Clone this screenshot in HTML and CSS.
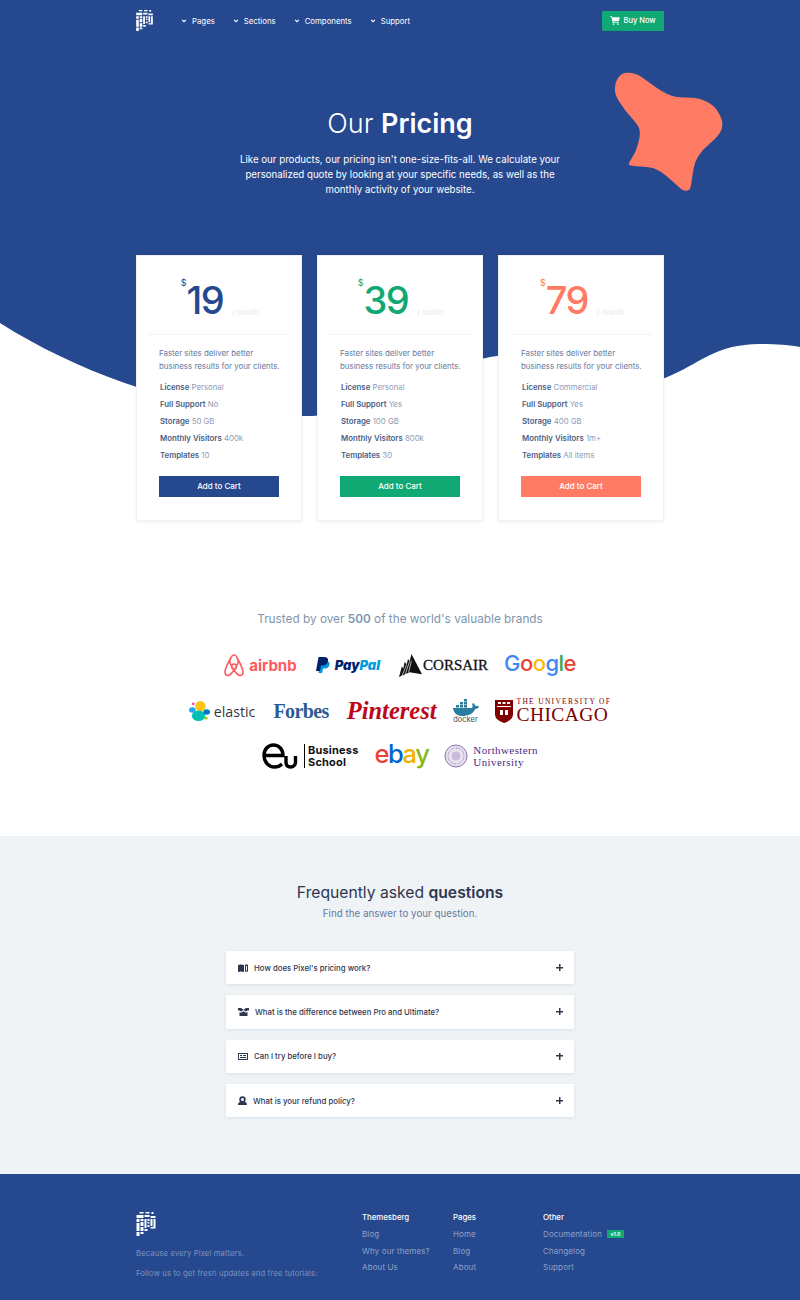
FILE: index.html
```html
<!DOCTYPE html>
<html lang="en">
<head>
    <meta charset="UTF-8">
    <title>Pixel - Our Pricing</title>
    <link rel="stylesheet" href="styles.css">
</head>
<body>
    <svg class="defs" width="0" height="0">
        <symbol id="logo" viewBox="0 0 19 24">
            <path fill="#fff" d="M3 0h4v1.5H3zM9 0h4v1.5H9zM15 0h2v2h-2zM0 3h7v3H0zM8 3h5v2H8zM14 4h5v2h-5zM0 7h3v3H0zM4 7h3v2H4zM0 11h3v8H0zM4 10h3v4H4zM8 7h2v9H8zM11 7h2v2h-2zM11 10h2v1.5h-2zM14 7h2v7h-2zM17 7h2v9h-2zM11 13h2v2h-2zM14 15h5v1.5h-5zM4 15h3v4H4zM8 17h3v2H8zM0 20h3v4H0zM4 20h3v2H4z"/>
        </symbol>
        <symbol id="chev" viewBox="0 0 8 8">
            <path fill="none" stroke="#fff" stroke-width="1.5" d="M1.5 2.5 4 5l2.5-2.5"/>
        </symbol>
    </svg>

    <div class="top">
        <svg class="wave" viewBox="0 0 800 420" width="800" height="420">
            <path fill="#25488f" d="M0 323C90 380 200 414 303 416C380 417 420 372 490 357C560 345 620 392 665 378C700 364 715 344 760 344C775 344 790 345 800 347V0H0Z"/>
        </svg>
        <svg class="blob" viewBox="0 0 110 122" width="110" height="122">
            <path fill="#ff7b63" d="M11 2C17 1 22 3 26 5C32 9 37 13 43 17C49 21 56 25 63 26C72 27 80 26 86 28C95 31 102 36 104 41C108 47 109 52 108 57C106 65 96 72 89 79C84 85 81 90 80 96C78 104 78 112 76 118C73 121 69 120 66 117C58 110 50 101 39 97C31 95 20 96 15 94C14 91 21 84 23 76C25 70 27 63 25 57C22 50 14 44 9 36C4 29 0 23 1 16C2 8 6 3 11 2Z"/>
        </svg>

        <header class="nav wrap">
            <svg class="nav-logo"><use href="#logo"/></svg>
            <nav class="nav-links">
                <a><svg class="chev"><use href="#chev"/></svg>Pages</a>
                <a><svg class="chev"><use href="#chev"/></svg>Sections</a>
                <a><svg class="chev"><use href="#chev"/></svg>Components</a>
                <a><svg class="chev"><use href="#chev"/></svg>Support</a>
            </nav>
            <a class="buy">
                <svg viewBox="0 0 12 11" width="10" height="9"><path fill="#fff" d="M0 0h2.2l.4 1.5H12l-1.4 5H3.8l.3 1h6.400v1H3.300L1.500 1H0z"/><circle fill="#fff" cx="4.200" cy="10" r="1"/><circle fill="#fff" cx="9.500" cy="10" r="1"/></svg>
                Buy Now
            </a>
        </header>

        <section class="hero">
            <h1>Our <b>Pricing</b></h1>
            <p>Like our products, our pricing isn't one-size-fits-all. We calculate your personalized quote by looking at your specific needs, as well as the monthly activity of your website.</p>
        </section>

        <section class="cards wrap">
            <div class="card blue">
                <div class="price"><span class="cur">$</span><span class="num">19</span><span class="per">/ month</span></div>
                <div class="body">
                    <p class="desc">Faster sites deliver better<br>business results for your clients.</p>
                    <ul>
                        <li><b>License</b> Personal</li>
                        <li><b>Full Support</b> No</li>
                        <li><b>Storage</b> 50 GB</li>
                        <li><b>Monthly Visitors</b> 400k</li>
                        <li><b>Templates</b> 10</li>
                    </ul>
                    <a class="cart">Add to Cart</a>
                </div>
            </div>
            <div class="card green">
                <div class="price"><span class="cur">$</span><span class="num">39</span><span class="per">/ month</span></div>
                <div class="body">
                    <p class="desc">Faster sites deliver better<br>business results for your clients.</p>
                    <ul>
                        <li><b>License</b> Personal</li>
                        <li><b>Full Support</b> Yes</li>
                        <li><b>Storage</b> 100 GB</li>
                        <li><b>Monthly Visitors</b> 800k</li>
                        <li><b>Templates</b> 30</li>
                    </ul>
                    <a class="cart">Add to Cart</a>
                </div>
            </div>
            <div class="card orange">
                <div class="price"><span class="cur">$</span><span class="num">79</span><span class="per">/ month</span></div>
                <div class="body">
                    <p class="desc">Faster sites deliver better<br>business results for your clients.</p>
                    <ul>
                        <li><b>License</b> Commercial</li>
                        <li><b>Full Support</b> Yes</li>
                        <li><b>Storage</b> 400 GB</li>
                        <li><b>Monthly Visitors</b> 1m+</li>
                        <li><b>Templates</b> All items</li>
                    </ul>
                    <a class="cart">Add to Cart</a>
                </div>
            </div>
        </section>
    </div>

    <section class="brands">
        <h2>Trusted by over <b>500</b> of the world's valuable brands</h2>
        <div class="logo-row row-1">
            <span class="brand airbnb">
                <svg viewBox="0 0 20 23" width="20" height="23"><path fill="none" stroke="#ff5a5f" stroke-width="1.6" d="M10 16C7 12 5 9 6 6C7 3 8.5 1 10 1s3 2 4 5c1 3-1 6-4 10c-2 3-4 5.500-6 5.500C2 21.500 1 20 1 18c0-3 3-9 6-14.500M10 16c2 3 4 5.500 6 5.500c2 0 3-1.500 3-3.500c0-3-3-9-6-14.500M10 10c-1.500 0-2.500 1-2.500 2.500c0 1.500 1 2.500 2.500 3.500c1.500-1 2.500-2 2.500-3.500C12.500 11 11.500 10 10 10z"/></svg>
                airbnb
            </span>
            <span class="brand paypal">
                <svg viewBox="0 0 14 17" width="14" height="17"><path fill="#009cde" d="M4 4h6c3 0 4 1.500 3.500 4c-.6 2.500-2.300 3.500-4.500 3.500H7L6.200 16H2.500z"/><path fill="#012169" d="M2.500 0H8c3 0 4.500 1.300 4 4c-.5 3-2.500 4.500-5 4.500H5L4 14H0z"/></svg>
                <i><b class="pay">Pay</b><b class="pal">Pal</b></i>
            </span>
            <span class="brand corsair">
                <svg viewBox="0 0 24 24" width="23" height="23"><path fill="#111" d="M0 24L3 13L4.500 15L6 8L8 11L9.500 5L11 8L13 0L24 21L11 19z"/><path fill="none" stroke="#fff" stroke-width=".7" d="M3 23L8 11M6.500 21L11 8M10 19L13 7"/></svg>
                <span>CORSAIR</span>
            </span>
            <span class="google"><span class="g-b">G</span><span class="g-r">o</span><span class="g-y">o</span><span class="g-b">g</span><span class="g-g">l</span><span class="g-r">e</span></span>
        </div>
        <div class="logo-row row-2">
            <span class="brand elastic">
                <svg viewBox="0 0 22 22" width="21" height="22"><circle cx="12" cy="6" r="5.500" fill="#fec514"/><ellipse cx="10" cy="16" rx="7" ry="5.500" fill="#00bfb3"/><ellipse cx="3.500" cy="10" rx="3.500" ry="2.800" fill="#1ba9f5"/><ellipse cx="18.500" cy="12" rx="3.500" ry="2.800" fill="#0077cc"/><rect x="3" y="2" width="3" height="3" rx="1.500" fill="#f04e98"/><rect x="16" y="17" width="3.500" height="3" rx="1.500" fill="#93c90e"/></svg>
                elastic
            </span>
            <span class="forbes">Forbes</span>
            <span class="pinterest">Pinterest</span>
            <span class="docker">
                <svg viewBox="0 -3 28 18" width="28" height="18"><path fill="#2a7d9e" d="M1 7h19c1-2 .5-3 0-4l1.500-1c1 .8 1.700 2 1.700 3c1.500-.3 3-.1 4 .8c-1 1.800-2.500 2.200-4 2.200C21 13 16 15 10 15C4 15 1.500 11 1 7z"/><path fill="#2a7d9e" d="M4 4h3v2.500H4zM8 4h3v2.500H8zM12 4h3v2.500h-3zM8 1h3v2.500H8zM12 1h3v2.500h-3zM12-2h3v2.500h-3z"/></svg>
                <span>docker</span>
            </span>
            <span class="brand chicago">
                <svg viewBox="0 0 18 23" width="18" height="23"><path fill="#800000" d="M0 0h18v14c0 5-4 7-9 9c-5-2-9-4-9-9z"/><path fill="#fff" d="M2 6h14v1H2zM3 2h3v2H3zM7.500 2h3v2h-3zM12 2h3v2h-3zM5 10h3v5H5zM10 10h3v5h-3z"/></svg>
                <span class="uc"><small>THE UNIVERSITY OF</small><strong>CHICAGO</strong></span>
            </span>
        </div>
        <div class="logo-row row-3">
            <span class="brand eu">
                <svg viewBox="0 0 36 26" width="36" height="26"><path fill="none" stroke="#000" stroke-width="3.400" d="M2.500 12.500H21C21 6.500 17 2 11.500 2C6 2 2 6.500 2 12.500C2 19 6.500 24 12.500 24C15.500 24 18 23 20 21M24 13V19C24 22 25.500 24 28.500 24C31.500 24 33.500 22 33.500 19V13"/></svg>
                <span class="eu-bar"></span>
                <span class="eu-text">Business<br>School</span>
            </span>
            <span class="ebay"><span class="g-r">e</span><span class="eb-b">b</span><span class="eb-y">a</span><span class="eb-g">y</span></span>
            <span class="brand nw">
                <svg viewBox="0 0 24 24" width="24" height="24"><circle cx="12" cy="12" r="11" fill="#e9e3f0" stroke="#8a74a8"/><circle cx="12" cy="12" r="8" fill="none" stroke="#9b88b5" stroke-dasharray="1.500 1"/><circle cx="12" cy="12" r="4.500" fill="#c9bcd8"/></svg>
                <span class="nw-text">Northwestern<br>University</span>
            </span>
        </div>
    </section>

    <section class="faq">
        <h2>Frequently asked <b>questions</b></h2>
        <p class="faq-sub">Find the answer to your question.</p>
        <div class="faq-list">
            <div class="faq-item">
                <svg viewBox="0 0 10 8" width="10" height="8"><path fill="#2e3650" d="M0 1c2-.8 3.500-.8 6 0v7c-2.500-.8-4-.8-6 0zM7 1c1-.6 2-.6 3 0v7c-1-.6-2-.6-3 0zM8 2v4.500c.4-.1.6-.1 1 0V2z"/></svg>
                <span>How does Pixel's pricing work?</span><i class="plus"></i>
            </div>
            <div class="faq-item">
                <svg viewBox="0 0 11 8" width="11" height="8"><path fill="#2e3650" d="M0 0l3 0 2.500 1.800L8 0h3v2.500H9.500L8 3.500 5.500 2 3 3.500 1.500 2.500H0zM1.500 4l1.500.800 2.500-1.500 2.500 1.500 1.500-.8V8h-8z"/></svg>
                <span>What is the difference between Pro and Ultimate?</span><i class="plus"></i>
            </div>
            <div class="faq-item">
                <svg viewBox="0 0 10 7" width="10" height="7"><path fill="#2e3650" d="M0 0h10v7H0zM1 1v5h8V1z"/><path fill="#2e3650" d="M2 2h2v1H2zM5 2h3v1H5zM2 4h6v1H2z"/></svg>
                <span>Can I try before I buy?</span><i class="plus"></i>
            </div>
            <div class="faq-item">
                <svg viewBox="0 0 9 9" width="9" height="9"><circle cx="4.500" cy="3.500" r="3.200" fill="#2e3650"/><circle cx="4.500" cy="3.500" r="1.500" fill="#fff"/><path fill="#2e3650" d="M0 9c0-2 1-3 2-3h5c1 0 2 1 2 3z"/></svg>
                <span>What is your refund policy?</span><i class="plus"></i>
            </div>
        </div>
    </section>

    <footer class="footer">
        <div class="wrap foot-inner">
            <div class="foot-about">
                <svg class="foot-logo"><use href="#logo"/></svg>
                <p>Because every Pixel matters.</p>
                <p>Follow us to get fresh updates and free tutorials:</p>
            </div>
            <div class="foot-col col-a">
                <h4>Themesberg</h4>
                <a>Blog</a>
                <a>Why our themes?</a>
                <a>About Us</a>
            </div>
            <div class="foot-col col-b">
                <h4>Pages</h4>
                <a>Home</a>
                <a>Blog</a>
                <a>About</a>
            </div>
            <div class="foot-col">
                <h4>Other</h4>
                <a>Documentation <span class="badge">v1.0</span></a>
                <a>Changelog</a>
                <a>Support</a>
            </div>
        </div>
    </footer>
</body>
</html>
```

FILE: styles.css
```css
* {
    box-sizing: border-box;
}
body {
    margin: 0;
    font-family: "Inter", "Liberation Sans", sans-serif;
    background: #fff;
    color: #2e3650;
    overflow-x: hidden;
}
h1, h2, h4, p, ul {
    margin: 0;
    padding: 0;
}
ul {
    list-style: none;
}
.defs {
    position: absolute;
}
.wrap {
    width: 528px;
    margin: 0 auto;
}

/* top blue area */
.top {
    position: relative;
}
.wave, .blob {
    position: absolute;
    top: 0;
    left: 0;
}
.blob {
    top: 71px;
    left: 614px;
}
.nav, .hero, .cards {
    position: relative;
}
.nav {
    height: 41px;
    display: flex;
    align-items: center;
}
.nav-logo {
    width: 17px;
    height: 21px;
    margin-right: 28px;
}
.nav-links {
    display: flex;
    gap: 18px;
    flex: 1;
}
.nav-links a {
    display: flex;
    align-items: center;
    color: #fff;
    font-size: 7.8px;
}
.chev {
    width: 6px;
    height: 6px;
    margin-right: 5px;
}
.buy {
    width: 62px;
    height: 20px;
    display: flex;
    align-items: center;
    justify-content: center;
    gap: 3px;
    background: #10a873;
    color: #fff;
    font-size: 7.5px;
    font-weight: 500;
    border-radius: 1px;
}

.hero {
    text-align: center;
    color: #fff;
    padding-top: 65px;
}
.hero h1 {
    font-size: 27px;
    line-height: 36px;
    font-weight: 300;
}
.hero h1 b {
    font-weight: 600;
}
.hero p {
    width: 340px;
    margin: 10px auto 0;
    font-size: 9.7px;
    line-height: 15px;
}

/* pricing cards */
.cards {
    display: grid;
    grid-template-columns: repeat(3, 166px);
    gap: 15px;
    margin-top: 58px;
}
.card {
    height: 266px;
    background: #fff;
    border: 1px solid #eef0f3;
    box-shadow: 0 1px 3px rgba(46, 54, 80, .08);
}
.price {
    height: 79px;
    margin: 0 11px;
    border-bottom: 1px solid #f3f4f6;
    display: flex;
    justify-content: center;
    padding-top: 21px;
}
.cur {
    font-size: 9px;
    line-height: 9px;
    margin: 1px 0 0 2px;
}
.num {
    font-size: 38px;
    line-height: 46px;
    font-weight: 500;
    letter-spacing: -1.6px;
}
.per {
    font-size: 7.5px;
    color: #e6e8ec;
    margin: 31px 0 0 9px;
}
.blue .cur, .blue .num {
    color: #25488f;
}
.green .cur, .green .num {
    color: #10a873;
}
.orange .cur, .orange .num {
    color: #ff7b63;
}
.body {
    padding: 12px 22px 0;
}
.desc {
    font-size: 7.9px;
    line-height: 12.5px;
    color: #66799e;
    white-space: nowrap;
}
.body ul {
    margin: 7px 0 0 1px;
}
.body li {
    font-size: 7.8px;
    line-height: 17px;
    color: #8d9bb5;
    white-space: nowrap;
}
.body li b {
    font-weight: 600;
    color: #4c5e85;
}
.cart {
    display: block;
    height: 21px;
    margin-top: 12px;
    font-size: 8px;
    font-weight: 500;
    line-height: 21px;
    text-align: center;
    color: #fff;
}
.blue .cart {
    background: #25488f;
}
.green .cart {
    background: #10a873;
}
.orange .cart {
    background: #ff7b63;
}

/* brand logos */
.brands {
    height: 315px;
    padding-top: 90px;
}
.brands h2 {
    font-size: 11.8px;
    line-height: 16px;
    font-weight: 400;
    color: #8095ad;
    text-align: center;
}
.brands h2 b {
    font-weight: 600;
}
.logo-row {
    display: flex;
    justify-content: center;
    align-items: center;
    height: 26px;
}
.row-1 {
    margin-top: 25px;
    gap: 19px;
}
.row-2 {
    margin-top: 20px;
    gap: 15px;
}
.row-3 {
    margin-top: 19px;
    gap: 16px;
}
.brand {
    display: flex;
    align-items: center;
    gap: 5px;
}
.airbnb {
    font-size: 15px;
    font-weight: 700;
    color: #ff5a5f;
}
.paypal {
    font-size: 13px;
    font-weight: 800;
}
.pay {
    color: #012169;
}
.pal {
    color: #009cde;
}
.corsair {
    gap: 1px;
    font-family: "Liberation Serif", serif;
    font-size: 15px;
    -webkit-text-stroke: .3px #111;
    color: #111;
}
.google {
    font-size: 22px;
    font-weight: 500;
    letter-spacing: -.6px;
    margin: -4px 0 0 -3px;
}
.g-b {
    color: #4285f4;
}
.g-r {
    color: #ea4335;
}
.g-y {
    color: #fbbc05;
}
.g-g {
    color: #34a853;
}
.elastic {
    font-family: "Open Sans", sans-serif;
    font-size: 14.2px;
    color: #343741;
    gap: 4px;
}
.forbes {
    margin: 0 3px;
    font-family: "Liberation Serif", serif;
    font-size: 20px;
    font-weight: 700;
    letter-spacing: -.6px;
    color: #2c5b94;
}
.pinterest {
    font-family: "Liberation Serif", serif;
    font-size: 24.5px;
    font-weight: 700;
    font-style: italic;
    color: #bd081c;
}
.docker {
    display: flex;
    flex-direction: column;
    align-items: center;
    font-size: 7.5px;
    line-height: 8px;
    color: #394d54;
}
.chicago {
    gap: 4px;
    font-family: "Liberation Serif", serif;
    color: #800000;
}
.uc {
    display: flex;
    flex-direction: column;
    line-height: 1;
}
.uc small {
    font-size: 7.5px;
    letter-spacing: 1.3px;
    white-space: nowrap;
}
.uc strong {
    font-size: 19.5px;
    font-weight: 400;
    letter-spacing: .4px;
}
.eu {
    gap: 6px;
}
.eu-bar {
    width: 1px;
    height: 24px;
    background: #000;
}
.eu-text {
    margin-left: -3px;
    font-size: 11px;
    line-height: 12.5px;
    font-weight: 700;
    letter-spacing: .2px;
    color: #111;
}
.ebay {
    font-size: 25.5px;
    letter-spacing: -1.5px;
    font-weight: 500;
    margin-top: -5px;
}
.eb-b {
    color: #0064d2;
}
.eb-y {
    color: #f5af02;
}
.eb-g {
    color: #86b817;
}
.nw-text {
    font-family: "Liberation Serif", serif;
    font-size: 11px;
    line-height: 12px;
    letter-spacing: .4px;
    color: #4e2a84;
}

/* faq */
.faq {
    height: 338px;
    background: #eff3f6;
    padding-top: 47px;
    text-align: center;
}
.faq h2 {
    font-size: 15.7px;
    line-height: 20px;
    font-weight: 400;
    color: #2e3650;
}
.faq h2 b {
    font-weight: 600;
}
.faq-sub {
    margin-top: 5px;
    font-size: 9.8px;
    line-height: 12px;
    color: #66799e;
}
.faq-list {
    width: 348px;
    margin: 31px auto 0;
    display: flex;
    flex-direction: column;
    gap: 11px;
}
.faq-item {
    height: 33.3px;
    display: flex;
    align-items: center;
    gap: 6px;
    padding: 0 11px 0 12px;
    background: #fff;
    box-shadow: 0 1px 3px rgba(46, 54, 80, .1);
    font-size: 7.8px;
    font-weight: 500;
    color: #2e3650;
    text-align: left;
}
.faq-item span {
    flex: 1;
}
.plus {
    width: 7px;
    height: 7px;
    background:
        linear-gradient(#2e3650, #2e3650) center / 7px 1.5px no-repeat,
        linear-gradient(#2e3650, #2e3650) center / 1.5px 7px no-repeat;
}

/* footer */
.footer {
    height: 126px;
    background: #25488f;
    padding-top: 38px;
}
.foot-inner {
    display: flex;
}
.foot-about {
    width: 226px;
}
.foot-logo {
    display: block;
    width: 20px;
    height: 24px;
    margin-bottom: 13px;
}
.foot-about p {
    font-size: 7.7px;
    letter-spacing: .12px;
    line-height: 10px;
    margin-bottom: 10px;
    color: #7f93bd;
    white-space: nowrap;
}
.foot-col {
    display: flex;
    flex-direction: column;
    font-size: 8px;
}
.col-a {
    width: 91px;
}
.col-b {
    width: 90px;
}
.foot-col h4 {
    font-size: 7.8px;
    line-height: 10px;
    font-weight: 500;
    color: #fff;
    margin-bottom: 7px;
}
.foot-col a {
    line-height: 10px;
    margin-bottom: 6.5px;
    letter-spacing: .12px;
    color: #8fa2c7;
    white-space: nowrap;
}
.badge {
    display: inline-block;
    margin-left: 3px;
    padding: 0 3px;
    background: #10a873;
    color: #fff;
    font-size: 5px;
    font-weight: 700;
    line-height: 8px;
    letter-spacing: 0;
    vertical-align: 1px;
}
```
